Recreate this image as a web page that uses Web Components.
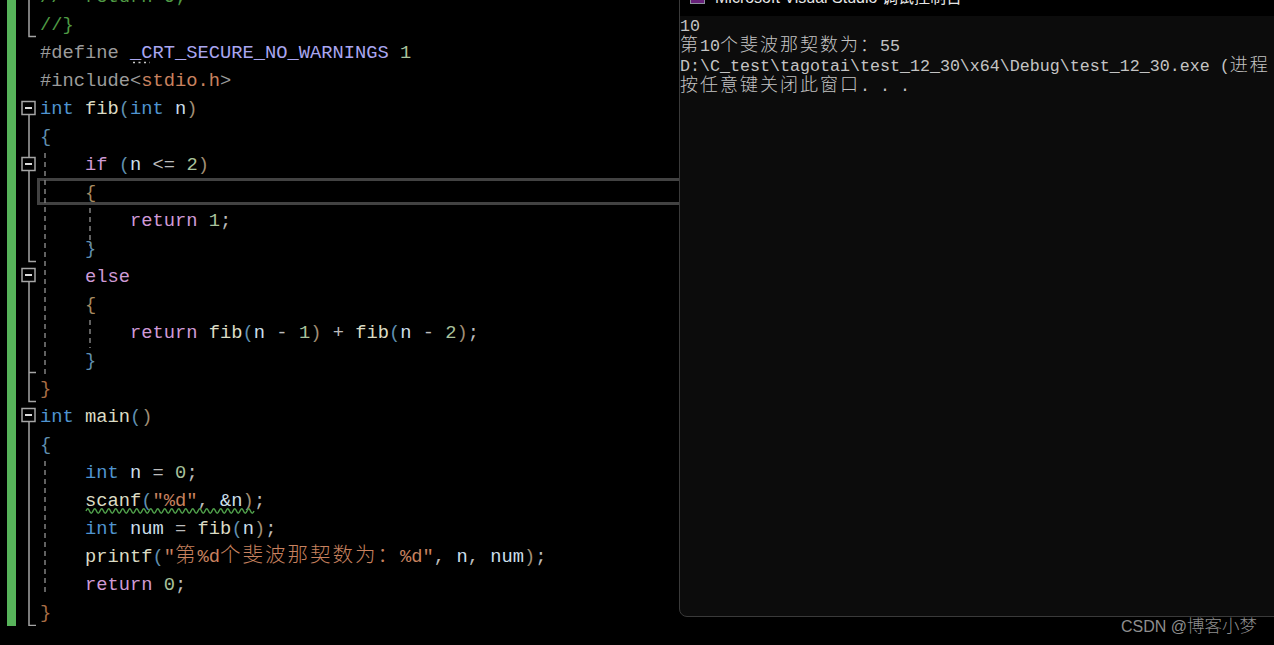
<!DOCTYPE html>
<html lang="zh">
<head>
<meta charset="utf-8">
<title>fib</title>
<style>
  html, body { margin: 0; height: 100%; background: #000; overflow: hidden; }
</style>
</head>
<body>
<ide-screen>
  <code-editor></code-editor>
  <console-window title-text="Microsoft Visual Studio 调试控制台">10
<zh-run>第</zh-run>10<zh-run>个斐波那契数为：</zh-run>55
D:\C_test\tagotai\test_12_30\x64\Debug\test_12_30.exe (<zh-run>进程</zh-run>
<zh-run>按任意键关闭此窗口</zh-run>. . .</console-window>
  <water-mark></water-mark>
</ide-screen>

<script>
// CJK cells are exactly twice the latin cell, so the run is scaled to the host cell
class ZhRun extends HTMLElement {
  constructor() {
    super();
    this.attachShadow({ mode: 'open' });
    // no whitespace in here: the host may be white-space: pre
    this.shadowRoot.innerHTML = '<style>:host { display: inline; font-family: "Noto Sans CJK SC", sans-serif; font-size: var(--zh-size, 18px); font-weight: 300; letter-spacing: var(--zh-gap, 2px); line-height: 0; }</style><slot></slot>';
  }
}

class IdeScreen extends HTMLElement {
  constructor() {
    super();
    this.attachShadow({ mode: 'open' });
    this.shadowRoot.innerHTML = `
      <style>
        :host {
          display: block;
          position: relative;
          width: 1274px;
          height: 645px;
          overflow: hidden;
          background: #000;
        }
      </style>
      <slot></slot>
    `;
  }
}

const LINES = [
  '<i class="c">//  return 0;</i>',
  '<i class="c">//}</i>',
  '<i class="p">#define </i><i class="m">_CRT_SECURE_NO_WARNINGS</i><i class="p"> </i><i class="g">1</i>',
  '<i class="p">#include</i><i class="p">&lt;</i><i class="s">stdio.h</i><i class="p">&gt;</i>',
  '<i class="k">int</i> <i class="f">fib</i><i class="l">(</i><i class="k">int</i> <i class="v">n</i><i class="r">)</i>',
  '<i class="l">{</i>',
  '    <i class="x">if</i> <i class="l">(</i><i class="v">n</i> <i class="o">&lt;=</i> <i class="g">2</i><i class="r">)</i>',
  '    <i class="b">{</i>',
  '        <i class="x">return</i> <i class="g">1</i><i class="o">;</i>',
  '    <i class="l">}</i>',
  '    <i class="x">else</i>',
  '    <i class="b">{</i>',
  '        <i class="x">return</i> <i class="f">fib</i><i class="l">(</i><i class="v">n</i> <i class="o">-</i> <i class="g">1</i><i class="r">)</i> <i class="o">+</i> <i class="f">fib</i><i class="l">(</i><i class="v">n</i> <i class="o">-</i> <i class="g">2</i><i class="r">)</i><i class="o">;</i>',
  '    <i class="l">}</i>',
  '<i class="e">}</i>',
  '<i class="k">int</i> <i class="f">main</i><i class="l">(</i><i class="r">)</i>',
  '<i class="l">{</i>',
  '    <i class="k">int</i> <i class="v">n</i> <i class="o">=</i> <i class="g">0</i><i class="o">;</i>',
  '    <i class="f">scanf</i><i class="l">(</i><i class="s">"%d"</i><i class="o">,</i> <i class="v">&amp;n</i><i class="r">)</i><i class="o">;</i>',
  '    <i class="k">int</i> <i class="v">num</i> <i class="o">=</i> <i class="f">fib</i><i class="l">(</i><i class="v">n</i><i class="r">)</i><i class="o">;</i>',
  '    <i class="f">printf</i><i class="l">(</i><i class="s">"<zh-run>第</zh-run>%d<zh-run>个斐波那契数为：</zh-run>%d"</i><i class="o">,</i> <i class="v">n</i><i class="o">,</i> <i class="v">num</i><i class="r">)</i><i class="o">;</i>',
  '    <i class="x">return</i> <i class="g">0</i><i class="o">;</i>',
  '<i class="e">}</i>'
];

class CodeEditor extends HTMLElement {
  constructor() {
    super();
    this.attachShadow({ mode: 'open' });
    // green squiggle under scanf(...)
    let wave = 'M86 511';
    for (let x = 86; x < 254; x += 7) {
      wave += ` q1.75 -4.4 3.5 0 t3.5 0`;
    }
    this.shadowRoot.innerHTML = `
      <style>
        :host {
          display: grid;
          grid-template-columns: 7px 9px 24px 1fr;
          position: relative;
          margin-top: -18px;
          width: 680px;
          font-family: "Liberation Mono", monospace;
          font-size: 18.75px;
          color: #dcdcdc;
          --zh-size: 20.5px;
          --zh-gap: 2px;
        }
        .bar { grid-column: 2; background: #57b35a; }
        .code { grid-column: 4; }
        .line { height: 28px; line-height: 30px; white-space: pre; }
        i { font-style: normal; }
        .c { color: #4f9a44; }
        .p { color: #9b9b9b; }
        .m { color: #a9a6f0; }
        .g { color: #a9c29c; }
        .s { color: #c8825f; }
        .k { color: #4f94d0; }
        .x { color: #cf9ad6; }
        .f { color: #dcdcc4; }
        .v { color: #cadeea; }
        .o { color: #bcbcbc; }
        .l { color: #5f8fb0; }
        .r { color: #a08e74; }
        .b { color: #a58a60; }
        .e { color: #a86e46; }
        .guides { position: absolute; left: 0; top: 0; }
        .current {
          position: absolute;
          left: 37px;
          top: 196px;
          width: 643px;
          height: 21px;
          border: 3px solid #424242;
          border-right: 0;
        }
      </style>
      <div class="bar"></div>
      <div class="code">${LINES.map(l => `<div class="line">${l}</div>`).join('')}</div>
      <div class="current"></div>
      <svg class="guides" width="300" height="644" fill="none">
        <g transform="translate(0 18)">
          <g stroke="#a5a5a5" stroke-width="1.5">
            <path d="M29 0V36.5H36"/>
            <path d="M29 115V157M29 171V261.5H36"/>
            <path d="M29 282V372.5H36M29 372V401.5H36"/>
            <path d="M29 422V625.5H36"/>
            <rect x="22" y="101.5" width="13" height="13"/>
            <rect x="22" y="157.5" width="13" height="13"/>
            <rect x="22" y="268.5" width="13" height="13"/>
            <rect x="22" y="408.5" width="13" height="13"/>
          </g>
          <path stroke="#dcdcdc" stroke-width="2" d="M25 108H32M25 164H32M25 275H32M25 415H32"/>
          <g stroke="#808080" stroke-width="1.5" stroke-dasharray="5 4">
            <path d="M45 153V376"/>
            <path d="M45 461V596"/>
            <path d="M90 208V246"/>
            <path d="M90 320V348"/>
          </g>
          <path stroke="#4f9e4a" stroke-width="1.5" d="${wave}"/>
          <path stroke="#c8c8c8" stroke-width="1.5" stroke-dasharray="2 3.5" d="M133 62.5H150"/>
        </g>
      </svg>
    `;
  }
}

class ConsoleWindow extends HTMLElement {
  constructor() {
    super();
    this.attachShadow({ mode: 'open' });
    this.shadowRoot.innerHTML = `
      <style>
        :host {
          display: flex;
          flex-direction: column;
          position: absolute;
          left: 679px;
          top: -15px;
          width: 610px;
          height: 632px;
          box-sizing: border-box;
          border: 1px solid #3a3a3a;
          border-radius: 8px;
          overflow: hidden;
          background: #0c0c0c;
        }
        .title {
          display: flex;
          align-items: center;
          gap: 10px;
          flex: none;
          box-sizing: border-box;
          height: 30px;
          padding: 0 0 11px 10px;
          background: #000;
          color: #e6e6e6;
          font: 16px "Liberation Sans", "Noto Sans CJK SC", sans-serif;
          white-space: nowrap;
        }
        .icon {
          flex: none;
          width: 13px;
          height: 13px;
          margin-top: 1px;
          background: #68217a;
          border: 1px solid #8f8f9f;
        }
        .body {
          padding-top: 1px;
          font-family: "Liberation Mono", monospace;
          font-size: 16.67px;
          line-height: 20px;
          color: #c4c4c4;
          white-space: pre;
        }
      </style>
      <div class="title"><span class="icon"></span><span id="label"></span></div>
      <div class="body"><slot></slot></div>
    `;
  }

  connectedCallback() {
    this.shadowRoot.getElementById('label').textContent = this.getAttribute('title-text');
  }
}

class WaterMark extends HTMLElement {
  constructor() {
    super();
    this.attachShadow({ mode: 'open' });
    this.shadowRoot.innerHTML = `
      <style>
        :host {
          position: absolute;
          right: 17px;
          top: 613px;
          color: #8e8e8e;
          font: 16px/24px "Liberation Sans", sans-serif;
          white-space: nowrap;
        }
        span { font: 300 17.5px/24px "Noto Sans CJK SC", sans-serif; }
      </style>
      CSDN @<span>博客小梦</span>
    `;
  }
}

customElements.define('zh-run', ZhRun);
customElements.define('ide-screen', IdeScreen);
customElements.define('code-editor', CodeEditor);
customElements.define('console-window', ConsoleWindow);
customElements.define('water-mark', WaterMark);
</script>
</body>
</html>
